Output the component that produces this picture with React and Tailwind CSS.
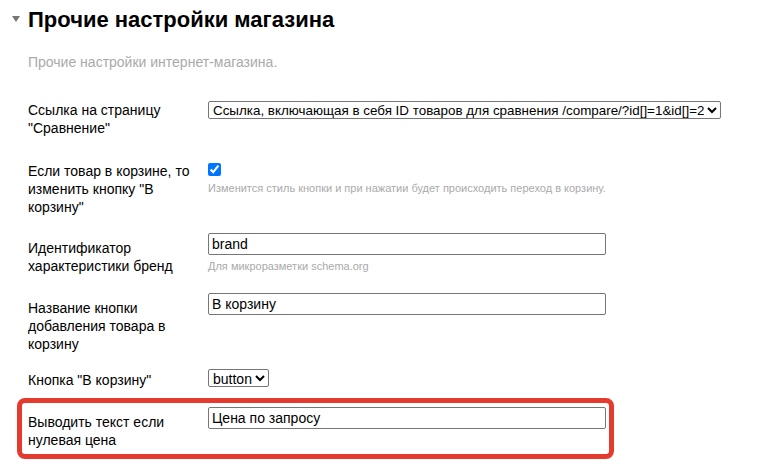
import React from 'react';

const font = { fontFamily: '"Liberation Sans", Arial, sans-serif' };

function Row({ label, labelPt = 'pt-0', className = '', children }) {
    return (
        <div className={`flex items-start ${className}`}>
            <div className={`w-[180px] shrink-0 pr-4 text-[14px] leading-[18px] text-black ${labelPt}`}>{label}</div>
            <div className="flex flex-col">{children}</div>
        </div>
    );
}

const inputCls =
    'h-[22px] w-[398px] rounded-[2px] border border-[#767676] bg-white px-[3px] text-[14px] text-black outline-none';

export default function App() {
    return (
        <div className="min-h-[476px] bg-white pl-[28px] pt-[7px]" style={font}>
            {/* Header */}
            <div className="relative flex items-center">
                <span className="absolute left-[-16px] top-[9px] h-0 w-0 border-x-[4px] border-t-[6px] border-x-transparent border-t-[#777]" />
                <h2 className="text-[22px] font-bold leading-[25px] text-black">Прочие настройки магазина</h2>
            </div>
            <p className="mt-[21px] text-[14px] leading-[18px] text-[#aaa]">Прочие настройки интернет-магазина.</p>

            <div className="mt-[30px] flex flex-col">
                {/* Ссылка на сравнение */}
                <Row label={'Ссылка на страницу "Сравнение"'}>
                    <select className="h-[18px] w-[513px] rounded-[2px] border border-[#767676] bg-white text-[13.4px] leading-[16px] text-black">
                        <option>Ссылка, включающая в себя ID товаров для сравнения /compare/?id[]=1&amp;id[]=2</option>
                    </select>
                </Row>

                {/* Кнопка в корзину */}
                <Row className="mt-[25px]" label={'Если товар в корзине, то изменить кнопку "В корзину"'}>
                    <input type="checkbox" defaultChecked className="m-0 mt-[1px] h-[13px] w-[13px]" />
                    <span className="mt-[5px] text-[11px] leading-[14px] text-[#aaa]">
                        Изменится стиль кнопки и при нажатии будет происходить переход в корзину.
                    </span>
                </Row>

                {/* Бренд */}
                <Row className="mt-[17px]" labelPt="pt-[6px]" label="Идентификатор характеристики бренд">
                    <input className={inputCls} defaultValue="brand" />
                    <span className="mt-[4px] text-[11px] leading-[14px] text-[#aaa]">Для микроразметки schema.org</span>
                </Row>

                {/* Название кнопки */}
                <Row className="mt-[18px]" labelPt="pt-[6px]" label="Название кнопки добавления товара в корзину">
                    <input className={inputCls} defaultValue="В корзину" />
                </Row>

                {/* Тип кнопки */}
                <Row className="mt-[16px]" labelPt="pt-[2px]" label={'Кнопка "В корзину"'}>
                    <select className="h-[18px] w-[61px] rounded-[2px] border border-[#767676] bg-white text-[14px] leading-[16px] text-black">
                        <option>button</option>
                    </select>
                </Row>

                {/* Выделенная строка */}
                <div className="ml-[-11px] mt-[9px] h-[61px] w-[597px] rounded-[8px] border-[5px] border-[#e53b2f] pl-[6px] pt-[4px]">
                    <Row labelPt="pt-[6px]" label="Выводить текст если нулевая цена">
                        <input className={inputCls} defaultValue="Цена по запросу" />
                    </Row>
                </div>
            </div>
        </div>
    );
}
